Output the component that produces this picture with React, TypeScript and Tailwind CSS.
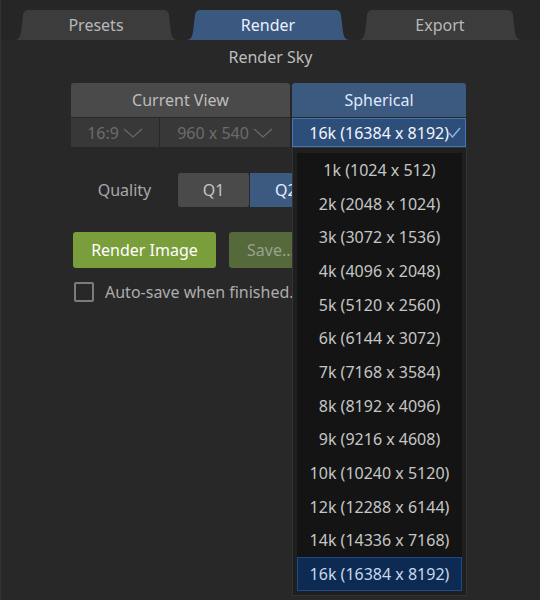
const sizes = [
  "1k (1024 x 512)",
  "2k (2048 x 1024)",
  "3k (3072 x 1536)",
  "4k (4096 x 2048)",
  "5k (5120 x 2560)",
  "6k (6144 x 3072)",
  "7k (7168 x 3584)",
  "8k (8192 x 4096)",
  "9k (9216 x 4608)",
  "10k (10240 x 5120)",
  "12k (12288 x 6144)",
  "14k (14336 x 7168)",
  "16k (16384 x 8192)",
];

function Tab({ label, active }: { label: string; active?: boolean }) {
  return (
    <div className="relative w-[164px] h-[30px] flex items-center justify-center">
      <svg className="absolute inset-0" width="164" height="30" viewBox="0 0 164 30">
        <path
          d="M0 30 C5 30 6 27 7 22 L9 5 C9.5 2 11 0 15 0 L149 0 C153 0 154.5 2 155 5 L157 22 C158 27 159 30 164 30 Z"
          fill={active ? "#3b5880" : "#3c3c3c"}
        />
      </svg>
      <span className={`relative text-[16px] ${active ? "text-[#e8f0ff]" : "text-[#b8b8b8]"}`}>{label}</span>
    </div>
  );
}

function Chevron() {
  return (
    <svg width="20" height="10" viewBox="0 0 20 10" className="ml-[4px]">
      <polyline points="1,1 10,9 19,1" fill="none" stroke="#6a6a6a" strokeWidth="1.2" />
    </svg>
  );
}

export default function App() {
  return (
    <div className="relative w-[540px] h-[600px] overflow-hidden bg-[#282828] border-l border-[#333333] font-['Noto_Sans',sans-serif]">
      <div className="flex gap-[8px] pt-[10px] pl-[13px] h-[40px] bg-[#262626]">
        <Tab label="Presets" />
        <Tab label="Render" active />
        <Tab label="Export" />
      </div>

      <div className="h-[34px] flex items-center justify-center text-[16px] text-[#bdbdbd]">Render Sky</div>

      <div className="ml-[70px] mt-[9px] w-[395px]">
        <div className="flex gap-[2px] h-[34px]">
          <div className="w-[219px] flex items-center justify-center bg-[#4a4a4a] rounded-t-[3px] text-[16px] text-[#bdbdbd]">
            Current View
          </div>
          <div className="w-[174px] flex items-center justify-center bg-[#3c5a80] rounded-t-[3px] text-[16px] text-[#dfe9ff]">
            Spherical
          </div>
        </div>
        <div className="flex mt-[1px] h-[29px]">
          <div className="w-[88px] flex items-center justify-center bg-[#383838] text-[16px] text-[#6c6c6c]">
            16:9
            <Chevron />
          </div>
          <div className="w-[130px] ml-[1px] flex items-center justify-center bg-[#383838] text-[16px] text-[#6c6c6c]">
            960 x 540
            <Chevron />
          </div>
          <div className="w-[174px] ml-[2px] flex items-center justify-end pr-[4px] bg-[#2e4e7a] border border-[#4576b8] text-[16px] text-[#f2f6ff]">
            16k (16384 x 8192)
            <svg width="13" height="11" viewBox="0 0 13 11" className="-ml-[1px]">
              <polyline points="1,6 4.5,10 12,1" fill="none" stroke="#8cbcee" strokeWidth="1.3" />
            </svg>
          </div>
        </div>

        <div className="flex mt-[26px] h-[34px]">
          <div className="w-[107px] flex items-center justify-center text-[16px] text-[#a8a8a8]">Quality</div>
          <div className="flex-1 flex gap-px">
            <div className="flex-1 flex items-center justify-center bg-[#4a4a4a] rounded-[3px] text-[16px] text-[#c4c4c4]">Q1</div>
            <div className="flex-1 flex items-center justify-center bg-[#3c5a80] text-[16px] text-[#e4eeff]">Q2</div>
            <div className="flex-1 bg-[#3e3e3e]" />
            <div className="flex-1 bg-[#3e3e3e] rounded-r-[3px]" />
          </div>
        </div>

        <div className="flex gap-[13px] mt-[25px] h-[36px] ml-[2px]">
          <div className="w-[143px] flex items-center justify-center bg-[#7a9e3c] rounded-[3px] text-[16px] text-white">
            Render Image
          </div>
          <div className="w-[143px] flex items-center pl-[18px] bg-[#55693a] rounded-[3px] text-[16px] text-[#9aa290]">
            Save...
          </div>
        </div>

        <div className="flex items-center mt-[13px] ml-[3px] h-[21px]">
          <div className="w-[20px] h-[20px] border-2 border-[#7c7c7c] rounded-[2px]" />
          <span className="ml-[11px] text-[16px] text-[#adadad]">Auto-save when finished...</span>
        </div>
      </div>

      <div className="absolute left-[291px] top-[147px] w-[175px] h-[449px] bg-[#1f1f1f] border border-[#333333] px-[4px] pt-[5px]">
        <div className="bg-[#141414] flex flex-col">
          {sizes.map((s, i) => {
            const sel = i === sizes.length - 1;
            return (
              <div
                key={s}
                className={
                  sel
                    ? "h-[33.7px] flex items-center justify-center bg-[#0c2a52] border border-[#1c4a8c] text-[16px] text-[#c8d8ee]"
                    : "h-[33.7px] flex items-center justify-center text-[16px] text-[#c6c6c6]"
                }
              >
                {s}
              </div>
            );
          })}
        </div>
      </div>
    </div>
  );
}
